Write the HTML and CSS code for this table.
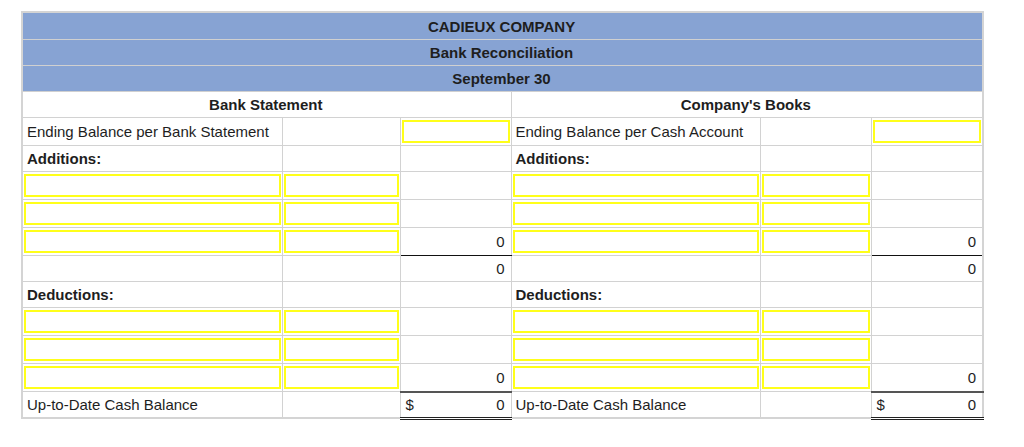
FILE: index.html
```html
<!DOCTYPE html>
<html>
<head>
<meta charset="utf-8">
<link rel="stylesheet" href="styles.css">
</head>
<body>
<table class="rec">
  <colgroup>
    <col class="c1"><col class="c2"><col class="c3"><col class="c4"><col class="c5"><col class="c6">
  </colgroup>
  <tr class="hd first"><td colspan="6">CADIEUX COMPANY</td></tr>
  <tr class="hd"><td colspan="6">Bank Reconciliation</td></tr>
  <tr class="hd"><td colspan="6">September 30</td></tr>
  <tr class="sub"><td colspan="3">Bank Statement</td><td colspan="3">Company's Books</td></tr>
  <tr>
    <td class="lbl">Ending Balance per Bank Statement</td><td></td><td class="in"><div class="box"></div></td>
    <td class="lbl">Ending Balance per Cash Account</td><td></td><td class="in"><div class="box"></div></td>
  </tr>
  <tr>
    <td class="lbl b">Additions:</td><td></td><td></td>
    <td class="lbl b">Additions:</td><td></td><td></td>
  </tr>
  <tr>
    <td class="in"><div class="box"></div></td><td class="in"><div class="box"></div></td><td></td>
    <td class="in"><div class="box"></div></td><td class="in"><div class="box"></div></td><td></td>
  </tr>
  <tr>
    <td class="in"><div class="box"></div></td><td class="in"><div class="box"></div></td><td></td>
    <td class="in"><div class="box"></div></td><td class="in"><div class="box"></div></td><td></td>
  </tr>
  <tr>
    <td class="in"><div class="box"></div></td><td class="in"><div class="box"></div></td><td class="num ul">0</td>
    <td class="in"><div class="box"></div></td><td class="in"><div class="box"></div></td><td class="num ul">0</td>
  </tr>
  <tr>
    <td></td><td></td><td class="num">0</td>
    <td></td><td></td><td class="num">0</td>
  </tr>
  <tr>
    <td class="lbl b">Deductions:</td><td></td><td></td>
    <td class="lbl b">Deductions:</td><td></td><td></td>
  </tr>
  <tr>
    <td class="in"><div class="box"></div></td><td class="in"><div class="box"></div></td><td></td>
    <td class="in"><div class="box"></div></td><td class="in"><div class="box"></div></td><td></td>
  </tr>
  <tr>
    <td class="in"><div class="box"></div></td><td class="in"><div class="box"></div></td><td></td>
    <td class="in"><div class="box"></div></td><td class="in"><div class="box"></div></td><td></td>
  </tr>
  <tr>
    <td class="in"><div class="box"></div></td><td class="in"><div class="box"></div></td><td class="num">0</td>
    <td class="in"><div class="box"></div></td><td class="in"><div class="box"></div></td><td class="num">0</td>
  </tr>
  <tr>
    <td class="lbl">Up-to-Date Cash Balance</td><td></td><td class="tot"><span>$</span><span>0</span></td>
    <td class="lbl">Up-to-Date Cash Balance</td><td></td><td class="tot"><span>$</span><span>0</span></td>
  </tr>
</table>
</body>
</html>
```

FILE: styles.css
```css
html, body {
  margin: 0;
  padding: 0;
  background: #ffffff;
}
body {
  padding: 11px 0 0 21px;
  font-family: "Liberation Sans", Arial, sans-serif;
  font-size: 15px;
  color: #1e1e1e;
}
.rec {
  border-collapse: collapse;
  table-layout: fixed;
  width: 961px;
  border: 2px solid #d4d4d4;
}
.c1 { width: 260px; }
.c2 { width: 118px; }
.c3 { width: 111px; }
.c4 { width: 249px; }
.c5 { width: 111px; }
.c6 { width: 112px; }
.rec td {
  border: 1px solid #d2d2d2;
  padding: 0 6px 0 4px;
  height: 25px;
  line-height: 17px;
  white-space: nowrap;
  overflow: hidden;
}
.rec .hd td {
  background: #87a3d3;
  text-align: center;
  font-weight: bold;
  border-left: none;
  border-right: none;
  border-color: #d0d0d0;
}
.rec .hd.first td {
  height: 26px;
}
.sub td {
  text-align: center;
  font-weight: bold;
}
.b { font-weight: bold; }
.rec td.in {
  padding: 1px;
}
.box {
  box-sizing: border-box;
  height: 23px;
  border: 2px solid #ffff1a;
}
.rec td.num {
  text-align: right;
  padding-right: 6px;
}
.rec td.ul {
  border-bottom: 1px solid #111;
}
.rec td.tot {
  height: 21px;
  padding: 0 6px 0 5px;
  border-top: 2px solid #555;
  border-bottom: 3px double #222;
}
.tot span:first-child { float: left; }
.tot span:last-child { float: right; }
```
